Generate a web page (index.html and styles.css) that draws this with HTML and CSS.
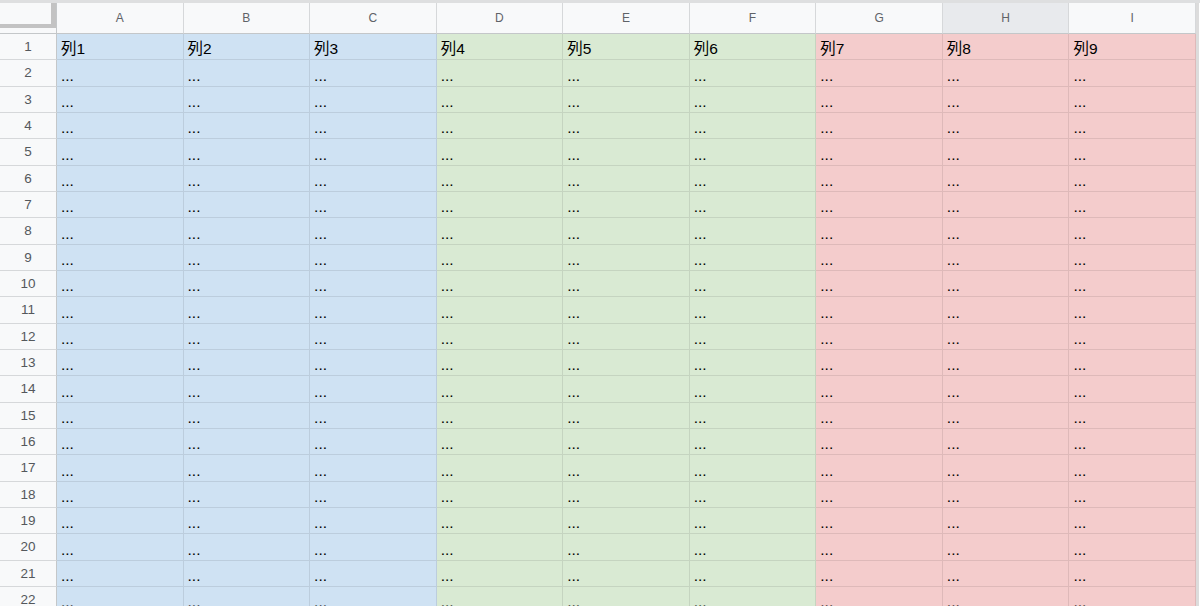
FILE: index.html
```html
<!DOCTYPE html>
<html lang="ja">
<head>
<meta charset="utf-8">
<link rel="stylesheet" href="styles.css">
</head>
<body>
<div class="frame">
<div class="grid">
<div class="corner"><div class="handle"></div></div>
<div class="ch">A</div><div class="ch">B</div><div class="ch">C</div><div class="ch">D</div><div class="ch">E</div><div class="ch">F</div><div class="ch">G</div><div class="ch hover">H</div><div class="ch">I</div>

<div class="rh">1</div><div class="cell b">列1</div><div class="cell b">列2</div><div class="cell b">列3</div><div class="cell g">列4</div><div class="cell g">列5</div><div class="cell g">列6</div><div class="cell r">列7</div><div class="cell r">列8</div><div class="cell r">列9</div>
<div class="rh">2</div><div class="cell b">...</div><div class="cell b">...</div><div class="cell b">...</div><div class="cell g">...</div><div class="cell g">...</div><div class="cell g">...</div><div class="cell r">...</div><div class="cell r">...</div><div class="cell r">...</div>
<div class="rh">3</div><div class="cell b">...</div><div class="cell b">...</div><div class="cell b">...</div><div class="cell g">...</div><div class="cell g">...</div><div class="cell g">...</div><div class="cell r">...</div><div class="cell r">...</div><div class="cell r">...</div>
<div class="rh">4</div><div class="cell b">...</div><div class="cell b">...</div><div class="cell b">...</div><div class="cell g">...</div><div class="cell g">...</div><div class="cell g">...</div><div class="cell r">...</div><div class="cell r">...</div><div class="cell r">...</div>
<div class="rh">5</div><div class="cell b">...</div><div class="cell b">...</div><div class="cell b">...</div><div class="cell g">...</div><div class="cell g">...</div><div class="cell g">...</div><div class="cell r">...</div><div class="cell r">...</div><div class="cell r">...</div>
<div class="rh">6</div><div class="cell b">...</div><div class="cell b">...</div><div class="cell b">...</div><div class="cell g">...</div><div class="cell g">...</div><div class="cell g">...</div><div class="cell r">...</div><div class="cell r">...</div><div class="cell r">...</div>
<div class="rh">7</div><div class="cell b">...</div><div class="cell b">...</div><div class="cell b">...</div><div class="cell g">...</div><div class="cell g">...</div><div class="cell g">...</div><div class="cell r">...</div><div class="cell r">...</div><div class="cell r">...</div>
<div class="rh">8</div><div class="cell b">...</div><div class="cell b">...</div><div class="cell b">...</div><div class="cell g">...</div><div class="cell g">...</div><div class="cell g">...</div><div class="cell r">...</div><div class="cell r">...</div><div class="cell r">...</div>
<div class="rh">9</div><div class="cell b">...</div><div class="cell b">...</div><div class="cell b">...</div><div class="cell g">...</div><div class="cell g">...</div><div class="cell g">...</div><div class="cell r">...</div><div class="cell r">...</div><div class="cell r">...</div>
<div class="rh">10</div><div class="cell b">...</div><div class="cell b">...</div><div class="cell b">...</div><div class="cell g">...</div><div class="cell g">...</div><div class="cell g">...</div><div class="cell r">...</div><div class="cell r">...</div><div class="cell r">...</div>
<div class="rh">11</div><div class="cell b">...</div><div class="cell b">...</div><div class="cell b">...</div><div class="cell g">...</div><div class="cell g">...</div><div class="cell g">...</div><div class="cell r">...</div><div class="cell r">...</div><div class="cell r">...</div>
<div class="rh">12</div><div class="cell b">...</div><div class="cell b">...</div><div class="cell b">...</div><div class="cell g">...</div><div class="cell g">...</div><div class="cell g">...</div><div class="cell r">...</div><div class="cell r">...</div><div class="cell r">...</div>
<div class="rh">13</div><div class="cell b">...</div><div class="cell b">...</div><div class="cell b">...</div><div class="cell g">...</div><div class="cell g">...</div><div class="cell g">...</div><div class="cell r">...</div><div class="cell r">...</div><div class="cell r">...</div>
<div class="rh">14</div><div class="cell b">...</div><div class="cell b">...</div><div class="cell b">...</div><div class="cell g">...</div><div class="cell g">...</div><div class="cell g">...</div><div class="cell r">...</div><div class="cell r">...</div><div class="cell r">...</div>
<div class="rh">15</div><div class="cell b">...</div><div class="cell b">...</div><div class="cell b">...</div><div class="cell g">...</div><div class="cell g">...</div><div class="cell g">...</div><div class="cell r">...</div><div class="cell r">...</div><div class="cell r">...</div>
<div class="rh">16</div><div class="cell b">...</div><div class="cell b">...</div><div class="cell b">...</div><div class="cell g">...</div><div class="cell g">...</div><div class="cell g">...</div><div class="cell r">...</div><div class="cell r">...</div><div class="cell r">...</div>
<div class="rh">17</div><div class="cell b">...</div><div class="cell b">...</div><div class="cell b">...</div><div class="cell g">...</div><div class="cell g">...</div><div class="cell g">...</div><div class="cell r">...</div><div class="cell r">...</div><div class="cell r">...</div>
<div class="rh">18</div><div class="cell b">...</div><div class="cell b">...</div><div class="cell b">...</div><div class="cell g">...</div><div class="cell g">...</div><div class="cell g">...</div><div class="cell r">...</div><div class="cell r">...</div><div class="cell r">...</div>
<div class="rh">19</div><div class="cell b">...</div><div class="cell b">...</div><div class="cell b">...</div><div class="cell g">...</div><div class="cell g">...</div><div class="cell g">...</div><div class="cell r">...</div><div class="cell r">...</div><div class="cell r">...</div>
<div class="rh">20</div><div class="cell b">...</div><div class="cell b">...</div><div class="cell b">...</div><div class="cell g">...</div><div class="cell g">...</div><div class="cell g">...</div><div class="cell r">...</div><div class="cell r">...</div><div class="cell r">...</div>
<div class="rh">21</div><div class="cell b">...</div><div class="cell b">...</div><div class="cell b">...</div><div class="cell g">...</div><div class="cell g">...</div><div class="cell g">...</div><div class="cell r">...</div><div class="cell r">...</div><div class="cell r">...</div>
<div class="rh">22</div><div class="cell b">...</div><div class="cell b">...</div><div class="cell b">...</div><div class="cell g">...</div><div class="cell g">...</div><div class="cell g">...</div><div class="cell r">...</div><div class="cell r">...</div><div class="cell r">...</div>
</div>
</div>
</body>
</html>
```

FILE: styles.css
```css
html, body {
  margin: 0;
  padding: 0;
  background: #ffffff;
  height: 606px;
  overflow: hidden;
}

.frame {
  border-top: 3px solid #dedfe0;
  width: 1200px;
}

.grid {
  display: grid;
  grid-template-columns: 57px repeat(9, 126.56px);
  grid-template-rows: 31px repeat(22, 26.333px);
  width: 1196px;
  border-right: 3px solid #dcdcdc;
  font-family: "Liberation Sans", Arial, "Noto Sans CJK JP", sans-serif;
}

.corner {
  background: #f8f9fa;
  border-right: 1px solid #c4c7c9;
  border-bottom: 1px solid #c4c7c9;
  box-sizing: border-box;
}

.handle {
  width: 56px;
  height: 25px;
  box-sizing: border-box;
  border-right: 5px solid #c3c3c3;
  border-bottom: 4px solid #c3c3c3;
}

.ch {
  background: #f8f9fa;
  border-right: 1px solid #d6d8da;
  border-bottom: 1px solid #c4c7c9;
  box-sizing: border-box;
  display: flex;
  align-items: center;
  justify-content: center;
  font-size: 12px;
  color: #5f6368;
}

.ch.hover {
  background: #e8eaed;
}

.rh {
  background: #f8f9fa;
  border-right: 1px solid #c4c7c9;
  border-bottom: 1px solid #d6d8da;
  box-sizing: border-box;
  display: flex;
  align-items: center;
  justify-content: center;
  font-size: 13.5px;
  color: #54585c;
}

.cell {
  box-sizing: border-box;
  border-right: 1px solid rgba(0, 0, 0, 0.09);
  border-bottom: 1px solid rgba(0, 0, 0, 0.09);
  display: flex;
  align-items: flex-end;
  padding: 0 4px 2px 4px;
  font-size: 15.5px;
  line-height: 17px;
  color: #000000;
  overflow: hidden;
  white-space: nowrap;
}

.cell.b { background: #cfe2f3; }
.cell.g { background: #d9ead3; }
.cell.r { background: #f4cccc; }
```
